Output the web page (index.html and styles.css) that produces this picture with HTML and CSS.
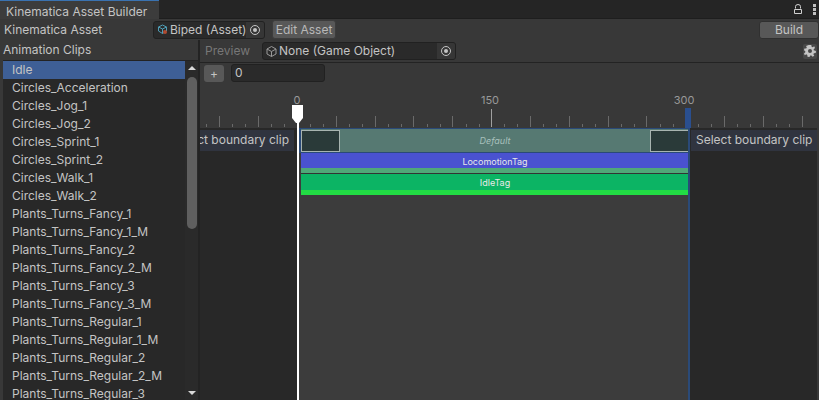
FILE: index.html
```html
<!DOCTYPE html>
<html lang="en">
<head>
<meta charset="utf-8">
<title>Kinematica Asset Builder</title>
<link rel="stylesheet" href="styles.css">
</head>
<body>
<div class="window">
  <header class="tabbar">
    <div class="tab">Kinematica Asset Builder</div>
    <div class="tab-tools">
      <svg class="lock" width="9" height="11" viewBox="0 0 9 11"><path d="M1.5 4.5V2.5Q1.5 .5 4 .5T6.5 2.5V4.5M.5 5.5H7.5V9.5H.5Z" fill="none" stroke="#d0d0d0"/></svg>
      <svg class="kebab" width="3" height="11" viewBox="0 0 3 11"><path d="M0 0h3v3H0zM0 4h3v3H0zM0 8h3v3H0z" fill="#c0c0c0"/></svg>
    </div>
  </header>
  <div class="asset-row">
    <span class="asset-label">Kinematica Asset</span>
    <div class="field asset-field">
      <svg class="obj-icon" width="11" height="11" viewBox="0 0 11 11"><path d="M5.500 1 9.500 3V7L5.500 9.500 1.500 7V3ZM1.500 3 5.500 5 9.500 3M5.500 5V9.500" fill="none" stroke="#4f9db5"/><circle cx="8" cy="8" r="2" fill="#b04a30"/></svg>
      <span class="field-text">Biped (Asset)</span>
      <span class="picker"><i class="target"></i></span>
    </div>
    <button class="btn edit-btn">Edit Asset</button>
    <button class="btn build-btn">Build</button>
  </div>
  <div class="main">
    <aside class="clips">
      <div class="clips-title">Animation Clips</div>
      <div class="clips-body">
        <ul class="clip-list">
          <li class="selected">Idle</li>
          <li>Circles_Acceleration</li>
          <li>Circles_Jog_1</li>
          <li>Circles_Jog_2</li>
          <li>Circles_Sprint_1</li>
          <li>Circles_Sprint_2</li>
          <li>Circles_Walk_1</li>
          <li>Circles_Walk_2</li>
          <li>Plants_Turns_Fancy_1</li>
          <li>Plants_Turns_Fancy_1_M</li>
          <li>Plants_Turns_Fancy_2</li>
          <li>Plants_Turns_Fancy_2_M</li>
          <li>Plants_Turns_Fancy_3</li>
          <li>Plants_Turns_Fancy_3_M</li>
          <li>Plants_Turns_Regular_1</li>
          <li>Plants_Turns_Regular_1_M</li>
          <li>Plants_Turns_Regular_2</li>
          <li>Plants_Turns_Regular_2_M</li>
          <li>Plants_Turns_Regular_3</li>
        </ul>
        <div class="scrollbar">
          <span class="arrow-up"></span>
          <span class="thumb"></span>
          <span class="arrow-down"></span>
        </div>
      </div>
    </aside>
    <section class="timeline">
      <div class="toolbar">
        <span class="preview">Preview</span>
        <div class="field go-field">
          <svg class="obj-icon" width="11" height="11" viewBox="0 0 11 11"><path d="M5.500 .5 10 3V8L5.500 10.500 1 8V3ZM1 3 5.500 5.500 10 3M5.500 5.500V10.500" fill="none" stroke="#9a9a9a"/></svg>
          <span class="field-text">None (Game Object)</span>
          <span class="picker"><i class="target"></i></span>
        </div>
        <button class="gear" aria-label="Settings">
          <svg width="12" height="12" viewBox="0 0 12 12"><path fill-rule="evenodd" fill="#c4c4c4" d="M4.700 0H7.300L7.600 1.700 8.700 2.200 10.200 1.200 11 3 9.700 4.200V5.300L12 6 11.700 8 9.900 8.200 9.400 9.300 10.300 10.800 8.600 11.800 7.400 10.500H6.200L5.500 12 3.500 11.700 3.300 9.900 2.200 9.300 .8 10.200 0 8.400 1.300 7.300V6.300L0 5.300.4 3.400H2.200L2.800 2.400 2 .9ZM6 4A2 2 0 1 0 6 8 2 2 0 1 0 6 4Z"/></svg>
        </button>
      </div>
      <div class="tag-row">
        <button class="btn add-btn">+</button>
        <div class="value-input">0</div>
      </div>
      <div class="ruler">
        <svg class="ticks" width="617" height="45" viewBox="202 82 617 45">
          <path stroke="#6a6a6a" fill="none" d="M208.500 123V126M234.500 123V126M247.500 123V126M273.500 123V126M286.500 123V126M312.500 123V126M325.500 123V126M351.500 123V126M364.500 123V126M390.500 123V126M403.500 123V126M429.500 123V126M442.500 123V126M468.500 123V126M481.500 123V126M506.500 123V126M519.500 123V126M545.500 123V126M558.500 123V126M584.500 123V126M597.500 123V126M623.500 123V126M636.500 123V126M662.500 123V126M675.500 123V126M700.500 123V126M713.500 123V126M739.500 123V126M752.500 123V126M778.500 123V126M791.500 123V126"/>
          <path stroke="#6a6a6a" fill="none" d="M221.500 115V126M260.500 115V126M338.500 115V126M377.500 115V126M415.500 115V126M454.500 115V126M532.500 115V126M571.500 115V126M610.500 115V126M648.500 115V126M726.500 115V126M765.500 115V126M804.500 115V126"/>
          <path stroke="#a0a0a0" fill="none" d="M493.500 108V126"/>
        </svg>
        <span class="tick-label label-0">0</span>
        <span class="tick-label label-150">150</span>
        <span class="tick-label label-300">300</span>
        <span class="end-handle"></span>
      </div>
      <div class="boundary-row">
        <div class="side-dark left-side"><div class="boundary-btn left-btn"><span>Select boundary clip</span></div></div>
        <div class="clip-bar">
          <span class="clip-cap"></span>
          <span class="clip-name">Default</span>
          <span class="clip-cap"></span>
        </div>
        <div class="side-dark right-side"><div class="boundary-btn right-btn"><span>Select boundary clip</span></div></div>
      </div>
      <div class="tracks">
        <div class="side-dark"></div>
        <div class="track-center">
          <div class="tag tag-blue">LocomotionTag</div>
          <div class="tag-strip strip-teal"></div>
          <div class="tag tag-green">IdleTag</div>
          <div class="tag-strip strip-lime"></div>
        </div>
        <div class="side-dark"></div>
      </div>
      <svg class="playhead" width="11" height="20" viewBox="0 0 11 20"><path d="M0 0H11V13L7 18H4L0 13Z" fill="#fff"/></svg>
      <span class="playhead-line"></span>
      <span class="end-line"></span>
    </section>
  </div>
</div>
</body>
</html>
```
FILE: styles.css
```css
* { box-sizing: border-box; }
html, body { margin: 0; height: 100%; overflow: hidden; }
body { background: #383838; color: #c4c4c4; font: 12px/18px Inter, "Noto Sans", sans-serif; }
button { font: inherit; color: inherit; padding: 0; }
.window { width: 819px; height: 400px; display: flex; flex-direction: column; overflow: hidden; }

.tabbar { height: 19px; flex: none; display: flex; justify-content: space-between; background: #252525; border-bottom: 1px solid #1e1e1e; }
.tab { width: 159px; height: 19px; padding: 2px 0 0 6px; background: #3c3c3c; border-top: 1px solid #3a72b0; line-height: 17px; white-space: nowrap; }
.tab-tools { display: flex; gap: 10px; padding: 4px 3px 0 0; align-items: flex-start; }
.lock { margin-right: 0; }

.asset-row { height: 21px; flex: none; display: flex; align-items: center; background: #383838; position: relative; }
.asset-label { width: 153px; padding-left: 4px; white-space: nowrap; }
.field { height: 18px; display: flex; align-items: center; background: #2a2a2a; border: 1px solid #212121; border-radius: 3px; overflow: hidden; }
.asset-field { width: 112px; }
.field .obj-icon { margin: 0 2px 0 3px; flex: none; }
.field-text { flex: 1; white-space: nowrap; }
.picker { width: 18px; height: 16px; flex: none; display: flex; align-items: center; justify-content: center; background: #363636; }
.target { width: 10px; height: 10px; border-radius: 50%; border: 1px solid #c4c4c4; display: flex; align-items: center; justify-content: center; }
.target::after { content: ""; width: 4px; height: 4px; border-radius: 50%; background: #c4c4c4; }
.btn { background: #585858; border: 1px solid #303030; border-radius: 3px; }
.edit-btn { width: 64px; height: 19px; margin-left: 7px; line-height: 16px; border-color: #3c3c3c; color: #b8b8b8; }
.build-btn { width: 60px; height: 18px; margin-left: auto; line-height: 15px; }

.main { flex: 1; min-height: 0; display: flex; }
.clips { width: 200px; flex: none; display: flex; flex-direction: column; border-right: 2px solid #232323; }
.clips-title { height: 20px; padding: 1px 0 0 3px; flex: none; }
.clips-body { flex: 1; min-height: 0; margin-left: 3px; display: flex; background: #282828; border-top: 1px solid #232323; }
.clip-list { flex: 1; margin: 0; padding: 0; list-style: none; overflow: hidden; }
.clip-list li { height: 18px; padding-left: 9px; line-height: 18px; white-space: nowrap; }
.clip-list .selected { background: #3e5f96; }
.scrollbar { width: 13px; flex: none; display: flex; flex-direction: column; align-items: center; background: #2a2a2a; padding-top: 5px; position: relative; }
.arrow-up { width: 0; height: 0; border: 4px solid transparent; border-top: 0; border-bottom: 4px solid #d8d8d8; }
.thumb { width: 10px; height: 152px; margin-top: 7px; background: #5f5f5f; border-radius: 5px; }
.arrow-down { width: 0; height: 0; margin-top: auto; margin-bottom: 5px; border: 4px solid transparent; border-bottom: 0; border-top: 4px solid #d8d8d8; }

.timeline { flex: 1; min-width: 0; display: flex; flex-direction: column; position: relative; }
.toolbar { height: 23px; flex: none; display: flex; align-items: center; padding-left: 5px; border-bottom: 1px solid #232323; position: relative; }
.preview { width: 57px; color: #777; }
.go-field { width: 194px; }
.gear { width: 14px; height: 15px; margin-left: auto; margin-right: 2px; background: #484848; border: 0; border-radius: 2px; display: flex; align-items: center; justify-content: center; }
.tag-row { height: 20px; flex: none; display: flex; align-items: center; padding-left: 4px; gap: 7px; }
.add-btn { width: 20px; height: 17px; line-height: 15px; background: #585858; border: 0; }
.value-input { width: 94px; height: 18px; padding-left: 3px; background: #2a2a2a; border: 1px solid #212121; border-radius: 3px; line-height: 16px; }

.ruler { height: 45px; flex: none; position: relative; }
.ticks { position: absolute; left: 0; top: 0; }
.tick-label { position: absolute; top: 10px; font-size: 11px; line-height: 14px; color: #999; transform: translateX(-50%); }
.label-0 { left: 97px; }
.label-150 { left: 290px; }
.label-300 { left: 484px; }
.end-handle { position: absolute; left: 485px; top: 25px; width: 6px; height: 20px; background: #2a4f8f; }

.boundary-row { height: 25px; flex: none; display: flex; }
.side-dark { background: #282828; flex: none; }
.boundary-row .side-dark, .tracks .side-dark:first-child { width: 99px; }
.tracks .side-dark:last-child { width: 128px; }
.right-side { width: 128px !important; }
.boundary-btn { height: 21px; margin-top: 2px; background: #30343f; overflow: hidden; white-space: nowrap; line-height: 20px; }
.left-btn { width: 94px; display: flex; justify-content: flex-end; padding-right: 5px; }
.right-btn { margin-left: 2px; padding-left: 5px; }
.clip-bar { width: 390px; flex: none; display: flex; justify-content: space-between; align-items: center; background: #567972; border: 1px solid #2a4a78; border-width: 1px 0 1px 2px; padding: 0; }
.clip-cap { width: 39px; height: 22px; background: #2a3a39; border: 1px solid #a8b4b0; }
.clip-name { font-size: 9px; font-style: italic; color: #a8c0bc; line-height: 12px; }

.tracks { flex: 1; min-height: 0; display: flex; }
.track-center { width: 390px; flex: none; background: #3c3c3c; padding-left: 2px; }
.tag { font-size: 9px; color: #e8e8e8; text-align: center; }
.tag-blue { height: 15px; line-height: 17px; background: #4a52d0; }
.strip-teal { height: 6px; background: #50a878; border-bottom: 1px solid #333; }
.tag-green { height: 16px; line-height: 18px; background: #0cb464; }
.strip-lime { height: 5px; background: #22dc44; }

.playhead { position: absolute; left: 92px; top: 65px; }
.playhead-line { position: absolute; left: 97px; top: 83px; bottom: 0; width: 2px; background: #fff; }
.end-line { position: absolute; left: 488px; top: 88px; bottom: 0; width: 2px; background: #2a4a78; }
```
